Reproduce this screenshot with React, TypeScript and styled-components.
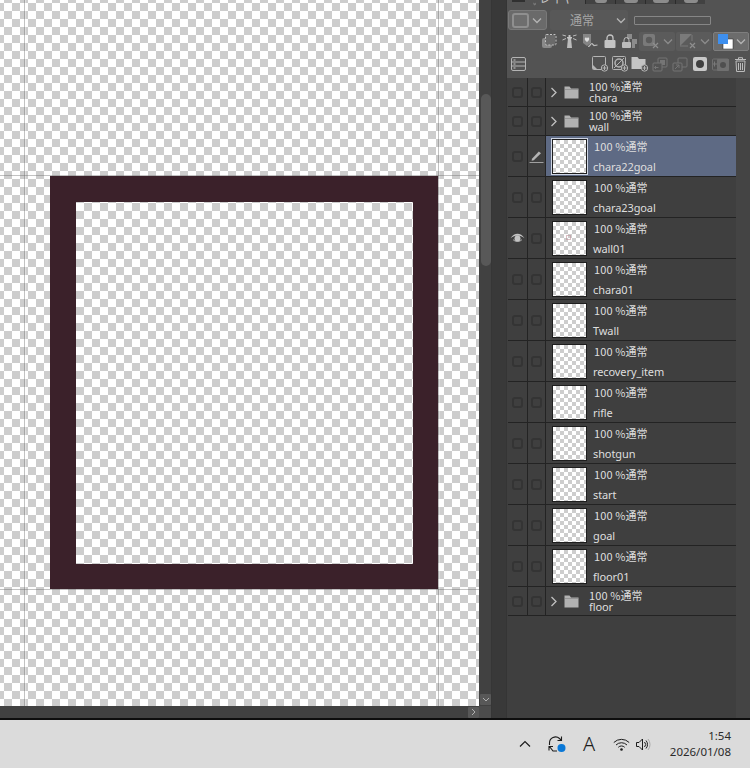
import styled, { createGlobalStyle } from 'styled-components';

const GlobalStyle = createGlobalStyle`
  html, body { margin: 0; padding: 0; background: #dcdcdc; }
  * { box-sizing: border-box; }
  #root { width: 750px; height: 768px; overflow: hidden; }
`;

const Page = styled.div`
  display: flex;
  flex-direction: column;
  width: 750px;
  height: 768px;
  font-family: 'Noto Sans', 'Noto Sans CJK JP', sans-serif;
`;

const Workspace = styled.div`
  display: flex;
  height: 720px;
  border-bottom: 2px solid #0e0e0e;
`;

const CanvasColumn = styled.div`
  display: flex;
  flex-direction: column;
  width: 491px;
  background: #414141;
`;

const CanvasRow = styled.div`
  display: flex;
  flex: 1;
  min-height: 0;
`;

const Canvas = styled.div`
  position: relative;
  width: 479px;
  overflow: hidden;
  background: conic-gradient(#cdcdcd 25%, #fff 0 50%, #cdcdcd 0 75%, #fff 0) 4px 3px / 16px 16px;
`;

const Guide = styled.div<{ $axis: 'x' | 'y'; $at: number }>`
  position: absolute;
  background: rgba(110, 110, 110, 0.42);
  ${(p) =>
    p.$axis === 'x'
      ? `left: ${p.$at}px; top: 0; bottom: 0; width: 1px; box-shadow: 1px 0 rgba(255,255,255,.35);`
      : `top: ${p.$at}px; left: 0; right: 0; height: 1px;`}
`;

const SquareFrame = styled.div`
  position: absolute;
  left: 50px;
  top: 176px;
  width: 388px;
  height: 413px;
  border: solid #3b212a;
  border-width: 26px 25px 25px 26px;
`;

const VScrollbar = styled.div`
  display: flex;
  flex-direction: column;
  align-items: center;
  width: 12px;
  padding-left: 1px;
`;

const VThumb = styled.div`
  width: 10px;
  height: 172px;
  margin-top: 94px;
  border-radius: 5px;
  background: #585858;
`;

const ScrollButton = styled.div`
  display: flex;
  align-items: center;
  justify-content: center;
  width: 11px;
  height: 11px;
  background: #585858;
  border-radius: 1px;
`;

const DownButton = styled(ScrollButton)`
  margin-top: auto;
  margin-bottom: 1px;
`;

const HScrollbar = styled.div`
  display: flex;
  height: 12px;
`;

const HTrack = styled.div`
  display: flex;
  justify-content: flex-end;
  align-items: center;
  width: 479px;
`;

const Corner = styled.div`
  width: 12px;
  background: #4c4c4c;
`;

const Gutter = styled.div`
  width: 16px;
  background: #393939;
  border-left: 1px solid #363636;
  border-right: 1px solid #353535;
`;

const Panel = styled.div`
  display: flex;
  flex-direction: column;
  width: 243px;
`;

const PanelHead = styled.div`
  height: 78px;
  background: #535353;
`;

const Tabs = styled.div`
  display: flex;
  align-items: flex-start;
  height: 8px;
  overflow: hidden;
`;

const TabStub = styled.div`
  width: 13px;
  height: 2px;
  margin: 0 8px 0 5px;
  background: #303030;
`;

const ActiveTab = styled.div`
  display: flex;
  align-items: flex-end;
  width: 52px;
  height: 8px;
  gap: 3px;
  color: #c8c8c8;
`;

const TabLabel = styled.span`
  font: 11.5px/12px 'Noto Sans CJK JP', sans-serif;
  white-space: nowrap;
  transform: translateY(-4px);
`;

const TabGhost = styled.div`
  display: flex;
  justify-content: center;
  width: 30px;
  height: 4px;
  background: #424242;
  border-left: 1px solid #2c2c2c;
`;

const TabGhostMark = styled.div<{ $w: number }>`
  width: ${(p) => p.$w}px;
  height: 3px;
  background: #8c8c8c;
  border-radius: 0 0 3px 3px;
`;

const BlendRow = styled.div`
  display: flex;
  align-items: center;
  height: 24px;
  padding-left: 1px;
`;

const PreviewButton = styled.div`
  display: flex;
  align-items: center;
  justify-content: space-between;
  width: 39px;
  height: 20px;
  padding: 0 4px 0 3px;
  background: #6a6a6a;
  border: 1px solid #797979;
  border-radius: 3px;
`;

const PreviewSquare = styled.div`
  width: 17px;
  height: 15px;
  border: 2px solid #8f8f8f;
  border-radius: 3px;
  background: #6e6e6e;
`;

const BlendSelect = styled.div`
  display: flex;
  align-items: center;
  justify-content: space-between;
  width: 78px;
  height: 20px;
  margin-left: 3px;
  padding: 0 2px 0 20px;
  background: #585858;
  border-radius: 2px;
  color: #a6a6a6;
  font: 12px/20px 'Noto Sans CJK JP', sans-serif;
`;

const OpacityBar = styled.div`
  width: 77px;
  height: 9px;
  margin-left: 6px;
  border: 1px solid #868686;
  border-radius: 1px;
`;

const ToolRow = styled.div`
  display: flex;
  align-items: center;
  height: 18px;
  padding-left: 33px;
`;

const ActionRow = styled.div`
  display: flex;
  align-items: center;
  height: 28px;
  padding-left: 1px;
`;

const Slot = styled.div`
  display: flex;
  align-items: center;
  justify-content: center;
  width: 20px;
  height: 18px;
`;

const ListSlot = styled(Slot)`
  margin-right: 62px;
`;

const DropButton = styled.div<{ $active?: boolean }>`
  display: flex;
  align-items: center;
  justify-content: space-between;
  width: 36px;
  height: 19px;
  padding: 0 2px 0 3px;
  background: ${(p) => (p.$active ? '#6c6c6c' : '#5b5b5b')};
  border: ${(p) => (p.$active ? '1px solid #7e7e7e' : 'none')};
  border-radius: 2px;
  margin-right: 1px;
`;

const ListArea = styled.div`
  display: flex;
  flex: 1;
  min-height: 0;
`;

const LayerList = styled.div`
  width: 229px;
  background: #3f3f3f;
`;

const RightStrip = styled.div`
  width: 14px;
  background: #444444;
`;

const Row = styled.div<{ $tall: boolean }>`
  display: grid;
  grid-template-columns: 20px 18px 1fr;
  height: ${(p) => (p.$tall ? 41 : 29)}px;
  border-bottom: 1px solid #232323;
  margin-left: 1px;
`;

const FlagCell = styled.div`
  display: flex;
  align-items: center;
  justify-content: center;
  border-right: 1px solid #232323;
`;

const CheckBox = styled.div`
  width: 11px;
  height: 11px;
  border: 2px solid #343434;
  border-radius: 3px;
`;

const Body = styled.div<{ $selected?: boolean }>`
  display: flex;
  align-items: center;
  background: ${(p) => (p.$selected ? '#5e6a84' : 'transparent')};
`;

const Thumb = styled.div<{ $selected?: boolean }>`
  position: relative;
  flex: none;
  width: 35px;
  height: 35px;
  margin-left: 6px;
  border: 1px solid #1e1e1e;
  background: conic-gradient(#cdcdcd 25%, #fff 0 50%, #cdcdcd 0 75%, #fff 0) -1px 0 / 8px 8px;
  ${(p) => (p.$selected ? 'outline: 1px solid #cdd4e2;' : '')}
`;

const ThumbDot = styled.div`
  position: absolute;
  left: 13px;
  top: 13px;
  width: 5px;
  height: 5px;
  border: 1px solid rgba(190, 140, 150, 0.55);
`;

const LayerText = styled.div`
  display: flex;
  flex-direction: column;
  justify-content: space-between;
  height: 40px;
  padding: 2px 0 1px 6px;
  color: #dedede;
`;

const Mode = styled.div`
  padding-left: 1px;
  font: 11px/16px 'Noto Sans CJK JP', sans-serif;
  letter-spacing: 0.1px;
  white-space: nowrap;
`;

const Name = styled.div`
  font: 11px/16px 'Noto Sans', sans-serif;
  letter-spacing: -0.1px;
  white-space: nowrap;
`;

const FolderBody = styled(Body)`
  padding-left: 4px;
`;

const FolderGlyph = styled.div`
  display: flex;
  margin-left: 6px;
`;

const FolderText = styled.div`
  display: flex;
  flex-direction: column;
  margin-left: 10px;
  padding-bottom: 2px;
  color: #dedede;
`;

const FolderMode = styled(Mode)`
  padding-left: 0;
  line-height: 12px;
`;

const FolderName = styled(Name)`
  line-height: 11px;
`;

const Taskbar = styled.div`
  display: flex;
  align-items: center;
  height: 48px;
  padding-left: 516px;
  background: #dbdbdb;
  color: #1c1c1c;
`;

const TrayIcon = styled.div<{ $w: number; $gap?: number }>`
  display: flex;
  align-items: center;
  justify-content: center;
  flex: none;
  width: ${(p) => p.$w}px;
  height: 48px;
  margin-left: ${(p) => p.$gap ?? 0}px;
`;

const ImeLetter = styled.span`
  font: 300 20px/24px 'Noto Sans', sans-serif;
`;

const Clock = styled.div`
  flex: 1;
  padding-right: 19px;
  font: 11.5px/16px 'Noto Sans', sans-serif;
  text-align: right;
  color: #2a2a2a;
`;

const Chevron = ({ color = '#b4b4b4' }: { color?: string }) => (
  <svg width="10" height="7" viewBox="0 0 10 7">
    <path d="M1 1.5 5 5.5 9 1.5" fill="none" stroke={color} strokeWidth="1.3" />
  </svg>
);

const Ico = ({ w = 16, h = 16, children }: { w?: number; h?: number; children: React.ReactNode }) => (
  <svg width={w} height={h} viewBox={`0 0 ${w} ${h}`}>
    {children}
  </svg>
);

const Eye = () => (
  <svg width="15" height="10" viewBox="0 0 15 10">
    <path d="M.5 5.3C2.5 2 5 .8 7.5.8s5 1.2 7 4.5C12 3.4 10 2.8 7.5 2.8S3 3.4.5 5.3Z" fill="#c4c4c4" />
    <circle cx="7.5" cy="5.6" r="3" fill="#c4c4c4" />
    <path d="M3 6.5c1 1.2 2.600 2 4.500 2s3.500-.8 4.500-2" fill="none" stroke="#c4c4c4" strokeWidth=".8" />
  </svg>
);

const Pen = () => (
  <svg width="15" height="13" viewBox="0 0 15 13">
    <path d="M3 8.800 9.800 1.500l2.200 1.800-7.200 7-2.200.5Z" fill="#b4b4b4" />
    <path d="M.5 12.500h14" stroke="#a0a0a0" strokeWidth="1" />
  </svg>
);

const FolderIcon = () => (
  <svg width="15" height="14" viewBox="0 0 15 14">
    <path d="M.5 1.500h5l1.500 2h7.500V13.500H.5Z" fill="#b2b2b2" />
    <path d="M1 4.500h13" stroke="#8a8a8a" strokeWidth=".7" />
  </svg>
);

const Expander = () => (
  <svg width="8" height="11" viewBox="0 0 8 11">
    <path d="M1.500 1 6 5.500 1.500 10" fill="none" stroke="#c0c0c0" strokeWidth="1.300" />
  </svg>
);

const Plus = ({ x, y }: { x: number; y: number }) => (
  <>
    <circle cx={x} cy={y} r="3.200" fill="#535353" stroke="#b4b4b4" />
    <path d={`M${x - 2} ${y}h4M${x} ${y - 2}v4`} stroke="#b4b4b4" />
  </>
);

type LayerItem = { name: string; folder?: boolean; selected?: boolean; visible?: boolean; dot?: boolean };

const layers: LayerItem[] = [
  { name: 'chara', folder: true },
  { name: 'wall', folder: true },
  { name: 'chara22goal', selected: true },
  { name: 'chara23goal' },
  { name: 'wall01', visible: true, dot: true },
  { name: 'chara01' },
  { name: 'Twall' },
  { name: 'recovery_item' },
  { name: 'rifle' },
  { name: 'shotgun' },
  { name: 'start' },
  { name: 'goal' },
  { name: 'floor01' },
  { name: 'floor', folder: true },
];

function LayerRow({ item }: { item: LayerItem }) {
  return (
    <Row $tall={!item.folder}>
      <FlagCell>{item.visible ? <Eye /> : <CheckBox />}</FlagCell>
      <FlagCell>{item.selected ? <Pen /> : <CheckBox />}</FlagCell>
      {item.folder ? (
        <FolderBody>
          <Expander />
          <FolderGlyph>
            <FolderIcon />
          </FolderGlyph>
          <FolderText>
            <FolderMode>100 %通常</FolderMode>
            <FolderName>{item.name}</FolderName>
          </FolderText>
        </FolderBody>
      ) : (
        <Body $selected={item.selected}>
          <Thumb $selected={item.selected}>{item.dot && <ThumbDot />}</Thumb>
          <LayerText>
            <Mode>100 %通常</Mode>
            <Name>{item.name}</Name>
          </LayerText>
        </Body>
      )}
    </Row>
  );
}

export default function App() {
  return (
    <Page>
      <GlobalStyle />
      <Workspace>
        <CanvasColumn>
          <CanvasRow>
            <Canvas>
              <Guide $axis="x" $at={24} />
              <Guide $axis="x" $at={438} />
              <Guide $axis="y" $at={175} />
              <Guide $axis="y" $at={589} />
              <SquareFrame />
            </Canvas>
            <VScrollbar>
              <VThumb />
              <DownButton>
                <svg width="8" height="5" viewBox="0 0 8 5">
                  <path d="M1 1 4 4 7 1" fill="none" stroke="#b0b0b0" />
                </svg>
              </DownButton>
            </VScrollbar>
          </CanvasRow>
          <HScrollbar>
            <HTrack>
              <ScrollButton>
                <svg width="5" height="8" viewBox="0 0 5 8">
                  <path d="M1 1 4 4 1 7" fill="none" stroke="#b0b0b0" />
                </svg>
              </ScrollButton>
            </HTrack>
            <Corner />
          </HScrollbar>
        </CanvasColumn>
        <Gutter />
        <Panel>
          <PanelHead>
            <Tabs>
              <TabStub />
              <ActiveTab>
                <svg width="14" height="8" viewBox="0 0 14 8">
                  <path d="M1 0 7 3l6-3M1 3l6 3 6-3M3 6l4 2 4-2" fill="none" stroke="#b8b8b8" strokeWidth="1.200" />
                </svg>
                <TabLabel>レイヤー</TabLabel>
              </ActiveTab>
              <TabGhost>
                <TabGhostMark $w={12} />
              </TabGhost>
              <TabGhost>
                <TabGhostMark $w={14} />
              </TabGhost>
              <TabGhost>
                <TabGhostMark $w={16} />
              </TabGhost>
              <TabGhost>
                <TabGhostMark $w={14} />
              </TabGhost>
            </Tabs>
            <BlendRow>
              <PreviewButton>
                <PreviewSquare />
                <Chevron />
              </PreviewButton>
              <BlendSelect>
                通常
                <Chevron />
              </BlendSelect>
              <OpacityBar />
            </BlendRow>
            <ToolRow>
              <Slot>
                <Ico w={15} h={14}>
                  <rect x="0" y="4" width="10" height="10" rx="2" fill="#8a8a8a" />
                  <rect x="3" y="1" width="10" height="10" fill="#6a6a6a" />
                  <rect x="3.500" y=".5" width="10.500" height="10.500" rx="1" fill="none" stroke="#c4c4c4" strokeDasharray="2 1.500" />
                </Ico>
              </Slot>
              <Slot>
                <Ico w={15} h={14}>
                  <path d="M6 4h3l1 10H5Z" fill="#bcbcbc" />
                  <path d="M5 3h5v1.500H5ZM6.500 1h2v2h-2Z" fill="#c4c4c4" />
                  <path d="M4 2 .5 1M4 4.500.5 6M11 2l3.500-1M11 4.500l3.500 1.500" stroke="#bcbcbc" />
                </Ico>
              </Slot>
              <Slot>
                <Ico w={16} h={14}>
                  <path d="M1 0h8v9l-4 3-4-3Z" fill="#858585" />
                  <path d="M5 8C2 6 2.500 3.500 3.800 3.500 4.500 3.500 5 4 5 4.500 5 4 5.500 3.500 6.200 3.500 7.500 3.500 8 6 5 8Z" fill="#dcdcdc" />
                  <path d="M6 12.500c2.500 0 2-3 4-3l2 2 3.500-.5" fill="none" stroke="#bcbcbc" strokeWidth="1.200" />
                </Ico>
              </Slot>
              <Slot>
                <Ico w={12} h={14}>
                  <path d="M3 6V4a3 3 0 0 1 6 0v2" fill="none" stroke="#c4c4c4" strokeWidth="1.300" />
                  <rect x=".5" y="6" width="11" height="8" rx="1" fill="#c4c4c4" />
                </Ico>
              </Slot>
              <Slot>
                <Ico w={15} h={14}>
                  <path d="M2 8V6a2.500 2.500 0 0 1 5 0v2" fill="none" stroke="#bcbcbc" />
                  <rect x="0" y="8" width="9" height="6" rx="1" fill="#bcbcbc" />
                  <path d="M5 0h5v5H5ZM10 5h5v5h-5ZM10 10h3v4h-3Z" fill="#bcbcbc" opacity=".55" />
                </Ico>
              </Slot>
              <DropButton>
                <Ico w={18} h={16}>
                  <rect x="1" y="1" width="12" height="12" rx="2" fill="#7a7a7a" />
                  <circle cx="7" cy="7" r="3.200" fill="#5b5b5b" />
                  <path d="M11 10l5 5M16 10l-5 5" stroke="#8e8e8e" strokeWidth="1.200" />
                </Ico>
                <Chevron color="#8c8c8c" />
              </DropButton>
              <DropButton>
                <Ico w={18} h={16}>
                  <path d="M1 1h12L1 13Z" fill="#7a7a7a" />
                  <path d="M13 2v6M1 13h8" stroke="#7a7a7a" />
                  <path d="M11 10l5 5M16 10l-5 5" stroke="#8e8e8e" strokeWidth="1.200" />
                </Ico>
                <Chevron color="#8c8c8c" />
              </DropButton>
              <DropButton $active>
                <Ico w={17} h={15}>
                  <rect x="6" y="5" width="10" height="10" fill="#fff" stroke="#222" strokeWidth=".5" />
                  <rect x="1" y="0" width="10" height="10" fill="#3e8fee" />
                </Ico>
                <Chevron />
              </DropButton>
            </ToolRow>
            <ActionRow>
              <ListSlot>
                <Ico w={15} h={14}>
                  <rect x=".5" y=".5" width="14" height="13" rx="1.500" fill="none" stroke="#b4b4b4" />
                  <path d="M.5 5h14M.5 9h14" stroke="#b4b4b4" />
                  <path d="M2.500 3h2M2.500 7h2M2.500 11h2" stroke="#c8c8c8" />
                </Ico>
              </ListSlot>
              <Slot>
                <Ico w={17} h={16}>
                  <rect x=".5" y=".5" width="13" height="13" rx="1" fill="none" stroke="#b4b4b4" />
                  <path d="M1 9l4 4H1Z" fill="#b4b4b4" />
                  <Plus x={12.500} y={12} />
                </Ico>
              </Slot>
              <Slot>
                <Ico w={17} h={16}>
                  <rect x=".5" y=".5" width="13" height="13" rx="1" fill="none" stroke="#b4b4b4" />
                  <circle cx="7" cy="7" r="4" fill="none" stroke="#b4b4b4" strokeWidth="1.500" />
                  <path d="M2 12 12 2" stroke="#b4b4b4" />
                  <Plus x={12.500} y={12} />
                </Ico>
              </Slot>
              <Slot>
                <Ico w={18} h={16}>
                  <path d="M.5 1h6l1.500 2h6.500v10H.5Z" fill="#c4c4c4" />
                  <Plus x={13.500} y={12} />
                </Ico>
              </Slot>
              <Slot>
                <Ico w={16} h={15}>
                  <rect x="6" y="1" width="9" height="9" rx="1" fill="none" stroke="#757575" />
                  <rect x="8" y="3" width="5" height="5" fill="#757575" />
                  <rect x="1" y="6" width="9" height="8" rx="1" fill="#535353" stroke="#757575" />
                  <path d="M2.500 10.500h4M4 9l-1.500 1.500L4 12" fill="none" stroke="#757575" />
                </Ico>
              </Slot>
              <Slot>
                <Ico w={16} h={15}>
                  <rect x="6" y="1" width="9" height="9" rx="1" fill="none" stroke="#757575" />
                  <rect x="1" y="6" width="9" height="8" rx="1" fill="#535353" stroke="#757575" />
                  <path d="M3 12 7 8M4 8h3v3" fill="none" stroke="#757575" />
                </Ico>
              </Slot>
              <Slot>
                <Ico w={14} h={14}>
                  <rect width="14" height="14" rx="2" fill="#c8c8c8" />
                  <circle cx="7" cy="7" r="4" fill="#3f3f3f" />
                </Ico>
              </Slot>
              <Slot>
                <Ico w={17} h={14}>
                  <rect x="5" y="2" width="12" height="12" rx="1" fill="#707070" />
                  <circle cx="11" cy="8" r="3" fill="#4f4f4f" />
                  <path d="M0 7h5M2.500 4.500v5" stroke="#7a7a7a" />
                  <rect x=".5" y="2" width="16" height="11" rx="1" fill="none" stroke="#707070" />
                </Ico>
              </Slot>
              <Slot>
                <Ico w={13} h={15}>
                  <path d="M1 2.500h11M4.500 2.500V.7h4v1.800" fill="none" stroke="#bcbcbc" />
                  <path d="M2 4h9l-.6 10.500H2.600Z" fill="none" stroke="#bcbcbc" />
                  <path d="M4.500 6v7M6.500 6v7M8.500 6v7" stroke="#bcbcbc" />
                </Ico>
              </Slot>
            </ActionRow>
          </PanelHead>
          <ListArea>
            <LayerList>
              {layers.map((item) => (
                <LayerRow key={item.name} item={item} />
              ))}
            </LayerList>
            <RightStrip />
          </ListArea>
        </Panel>
      </Workspace>
      <Taskbar>
        <TrayIcon $w={17}>
          <svg width="12" height="8" viewBox="0 0 12 8">
            <path d="M1 6.500 6 1.500l5 5" fill="none" stroke="#1c1c1c" strokeWidth="1.200" />
          </svg>
        </TrayIcon>
        <TrayIcon $w={48}>
          <svg width="18" height="18" viewBox="0 0 18 18">
            <path d="M1.500 10V8a6 6 0 0 1 10-4.500L13 5" fill="none" stroke="#1c1c1c" strokeWidth="1.100" />
            <path d="M13.500 1.500V5.500H9.500" fill="none" stroke="#1c1c1c" strokeWidth="1.100" />
            <path d="M1 15.500V11.500h4M1.500 11.500 5 16h4" fill="none" stroke="#1c1c1c" strokeWidth="1.100" />
            <circle cx="13.500" cy="13" r="4" fill="#0a78d7" />
          </svg>
        </TrayIcon>
        <TrayIcon $w={16}>
          <ImeLetter>A</ImeLetter>
        </TrayIcon>
        <TrayIcon $w={18} $gap={15}>
          <svg width="17" height="13" viewBox="0 0 17 13">
            <path d="M.8 4.500a11 11 0 0 1 15.400 0M3 7a7.800 7.800 0 0 1 11 0M5.300 9.300a4.500 4.500 0 0 1 6.400 0" fill="none" stroke="#1c1c1c" />
            <circle cx="8.500" cy="11.500" r="1.300" fill="#1c1c1c" />
          </svg>
        </TrayIcon>
        <TrayIcon $w={16} $gap={6}>
          <svg width="16" height="13" viewBox="0 0 16 13">
            <path d="M.5 4.500h2.500L6.500 1v11L3 8.500H.5Z" fill="none" stroke="#1c1c1c" />
            <path d="M8.500 4a3.500 3.500 0 0 1 0 5M10 2.500a6 6 0 0 1 0 8" fill="none" stroke="#1c1c1c" />
            <path d="M12 1a8.500 8.500 0 0 1 0 11" fill="none" stroke="#a8a8a8" />
          </svg>
        </TrayIcon>
        <Clock>
          1:54
          <br />
          2026/01/08
        </Clock>
      </Taskbar>
    </Page>
  );
}
